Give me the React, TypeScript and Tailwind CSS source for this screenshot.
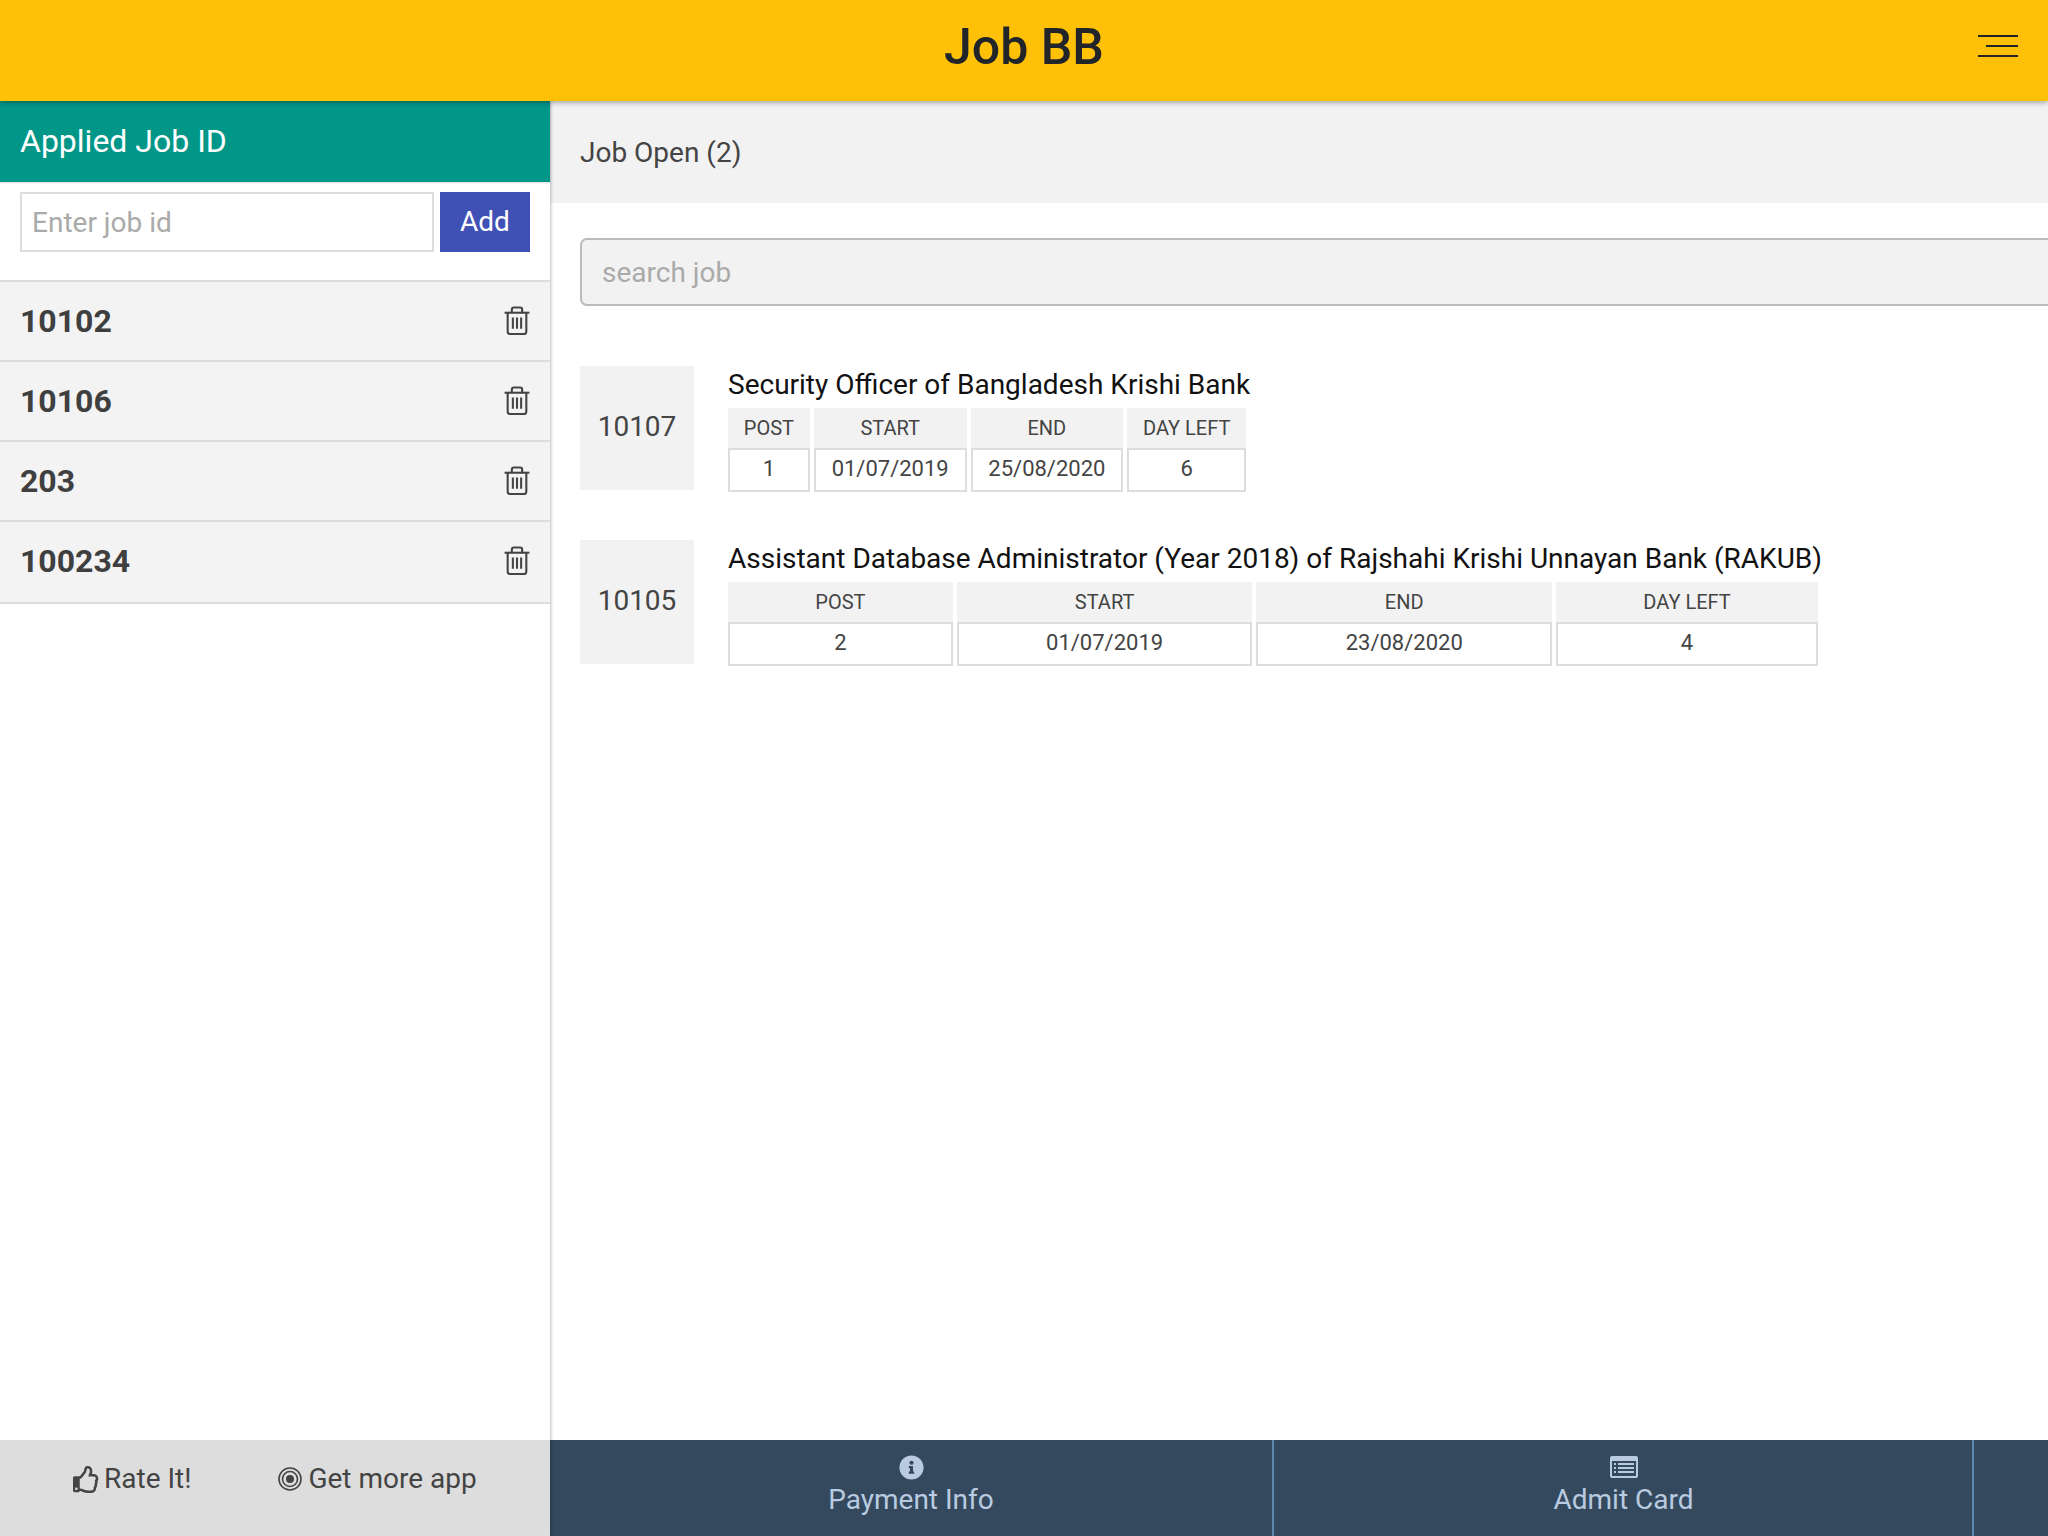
import React from "react";
import { FaRegThumbsUp, FaInfoCircle } from "react-icons/fa";

const applied = ["10102", "10106", "203", "100234"];
const jobs = [
  { id: "10107", title: "Security Officer of Bangladesh Krishi Bank", post: "1", start: "01/07/2019", end: "25/08/2020", left: "6" },
  { id: "10105", title: "Assistant Database Administrator (Year 2018) of Rajshahi Krishi Unnayan Bank (RAKUB)", post: "2", start: "01/07/2019", end: "23/08/2020", left: "4" },
];

function TrashIcon() {
  return (
    <svg width="28" height="29" viewBox="0 0 26 28" fill="none" stroke="#444" strokeWidth="2" className="shrink-0 mb-[2px]">
      <path d="M1 6.5H25" />
      <path d="M8 6V3.5Q8 1.5 10 1.5H16Q18 1.5 18 3.5V6" />
      <path d="M4 6.5V24.5Q4 27 6.5 27H19.5Q22 27 22 24.5V6.5" />
      <path d="M9 11V22M13 11V22M17 11V22" />
    </svg>
  );
}

function RingsIcon() {
  return (
    <svg width="24" height="24" viewBox="0 0 24 24" fill="none" stroke="#444" className="shrink-0 mr-[6px]">
      <circle cx="12" cy="12" r="11" strokeWidth="1.6" />
      <circle cx="12" cy="12" r="7.5" strokeWidth="1.6" />
      <circle cx="12" cy="12" r="4" fill="#444" stroke="none" />
    </svg>
  );
}

function AdmitIcon() {
  return (
    <svg width="28" height="22" viewBox="0 0 28 22">
      <rect x="0" y="0" width="28" height="22" rx="2" fill="#b9cbe0" />
      <rect x="2" y="5" width="24" height="15" fill="#34495e" />
      <rect x="4" y="7" width="2" height="2" fill="#b9cbe0" />
      <rect x="4" y="11" width="2" height="2" fill="#b9cbe0" />
      <rect x="4" y="15" width="2" height="2" fill="#b9cbe0" />
      <rect x="8" y="7" width="16" height="2" fill="#b9cbe0" />
      <rect x="8" y="11" width="16" height="2" fill="#b9cbe0" />
      <rect x="8" y="15" width="16" height="2" fill="#b9cbe0" />
    </svg>
  );
}

export default function App() {
  return (
    <div className="h-[1536px] w-[2048px] overflow-hidden flex flex-col bg-white font-['Roboto',sans-serif] text-[#3a3a3a]">
      <header className="relative z-20 h-[101px] shrink-0 bg-[#ffc107] flex items-center justify-center shadow-[0_2px_5px_rgba(0,0,0,0.3)]">
        <h1 className="text-[50px] font-medium text-[#212529] leading-none mb-[8px]">Job BB</h1>
        <div className="absolute right-[30px] top-[35px] w-[40px] flex flex-col items-end gap-[8px]">
          <span className="block h-[2px] w-[40px] bg-[#212529]" />
          <span className="block h-[2px] w-[32px] bg-[#212529]" />
          <span className="block h-[2px] w-[40px] bg-[#212529]" />
        </div>
      </header>

      <div className="flex flex-1 min-h-0">
        <aside className="relative z-10 w-[550px] shrink-0 flex flex-col shadow-[1px_0_3px_rgba(0,0,0,0.25)]">
          <div className="relative h-[81px] shrink-0 bg-[#009688] flex items-center pl-[20px] pb-[2px] text-[32px] text-white shadow-[0_1px_2px_rgba(0,0,0,0.15)]">Applied Job ID</div>
          <div className="flex gap-[6px] pl-[20px] pt-[10px] pb-[28px] border-b-2 border-[#ddd] h-[100px] shrink-0">
            <input
              placeholder="Enter job id"
              className="w-[414px] h-[60px] border-2 border-[#ddd] bg-white px-[10px] text-[28px] outline-none placeholder:text-[#aaa]"
            />
            <button className="w-[90px] h-[60px] bg-[#3f51b5] text-white text-[28px]">Add</button>
          </div>
          <div className="flex-1">
            {applied.map((id, i) => (
              <div key={id} className={`${i === 3 ? "h-[82px] pb-[2px]" : "h-[80px]"} bg-[#f3f3f3] border-b-2 border-[#ddd] flex items-center justify-between pl-[20px] pr-[19px]`}>
                <span className="text-[32px] font-bold text-[#3f3f3f]">{id}</span>
                <TrashIcon />
              </div>
            ))}
          </div>
          <div className="h-[96px] shrink-0 bg-[#dddddd] flex items-center pb-[18px] text-[28px] text-[#444]">
            <span className="flex items-center ml-[73px]"><FaRegThumbsUp className="text-[27px] mr-[4px]" />Rate It!</span>
            <span className="flex items-center ml-[87px]"><RingsIcon />Get more app</span>
          </div>
        </aside>

        <main className="flex-1 min-w-0 flex flex-col">
          <div className="h-[102px] shrink-0 bg-[#f2f2f2] flex items-center pl-[30px] pt-[2px] text-[28px] text-[#444]">Job Open (2)</div>
          <div className="flex-1 min-h-0 pl-[30px] pt-[35px]">
            <input
              placeholder="search job"
              className="w-[1600px] h-[68px] bg-[#f2f2f2] border-2 border-[#bbb] rounded-[7px] px-[20px] text-[28px] outline-none placeholder:text-[#aaa]"
            />
            <div className="mt-[60px] flex flex-col gap-[48px]">
              {jobs.map((j) => (
                <div key={j.id} className="flex items-start">
                  <div className="w-[114px] h-[124px] bg-[#f2f2f2] flex items-center justify-center pb-[2px] text-[28px] text-[#444] shrink-0">{j.id}</div>
                  <div className="ml-[34px] inline-block">
                    <div className="text-[28px] text-[#111] leading-[38px] mb-[4px] whitespace-nowrap">{j.title}</div>
                    <div className="flex gap-[4px] w-[calc(100%-4px)] text-center text-[#444]">
                      {[
                        ["POST", j.post],
                        ["START", j.start],
                        ["END", j.end],
                        ["DAY LEFT", j.left],
                      ].map(([h, v]) => (
                        <div key={h} className="flex-auto flex flex-col">
                          <div className="bg-[#f2f2f2] h-[40px] px-[15px] text-[20px] flex items-center justify-center whitespace-nowrap">{h}</div>
                          <div className="border-2 border-[#ddd] h-[44px] px-[15px] pb-[3px] text-[22px] flex items-center justify-center">{v}</div>
                        </div>
                      ))}
                    </div>
                  </div>
                </div>
              ))}
            </div>
          </div>
          <nav className="h-[96px] shrink-0 bg-[#34495e] flex text-[#b9cbe0] text-[28px] leading-[32px]">
            <div className="w-[724px] shrink-0 flex flex-col items-center pt-[13px] border-r-2 border-[#5d86b0]">
              <span className="h-[28px] flex items-center mb-[3px]"><FaInfoCircle className="text-[25px]" /></span>
              Payment Info
            </div>
            <div className="w-[700px] shrink-0 flex flex-col items-center pt-[13px] pl-[1px] border-r-2 border-[#5d86b0]">
              <span className="h-[28px] flex items-center mb-[3px]"><AdmitIcon /></span>
              Admit Card
            </div>
          </nav>
        </main>
      </div>
    </div>
  );
}
